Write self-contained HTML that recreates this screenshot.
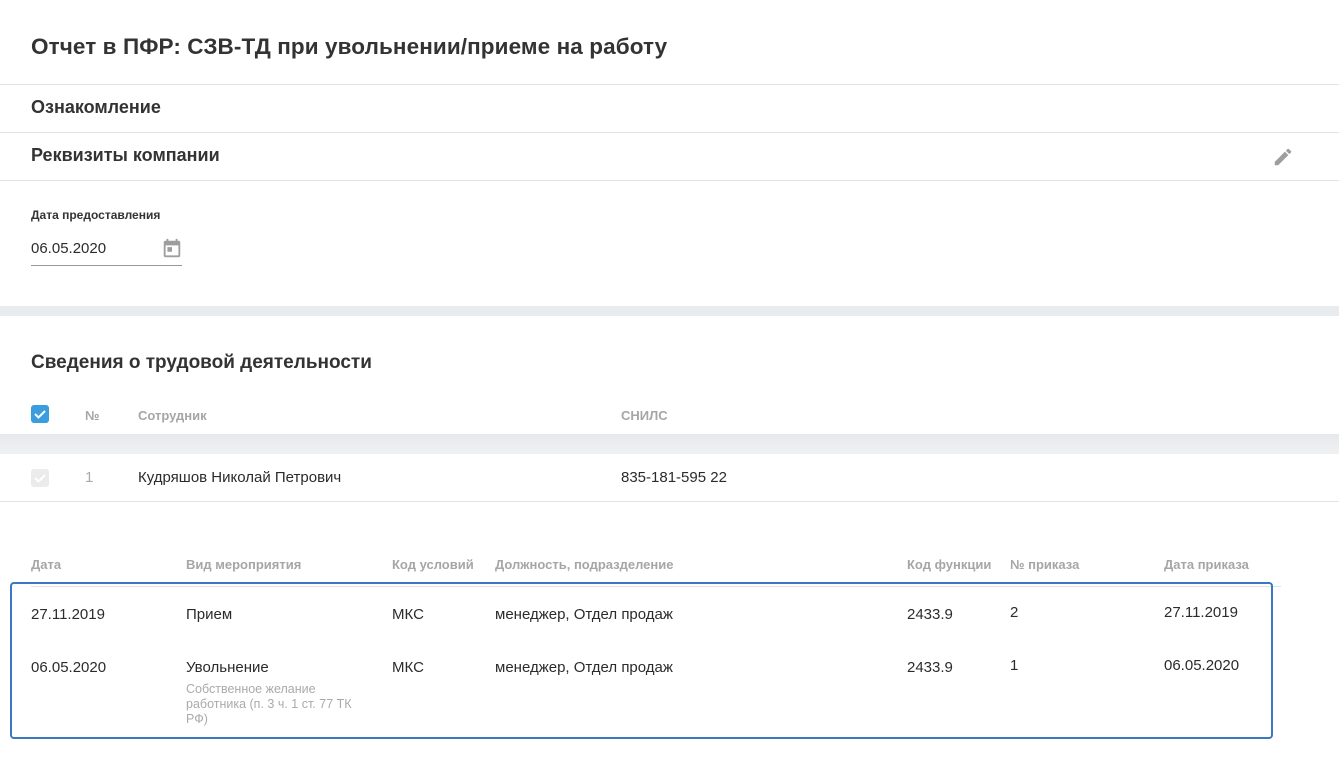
<!DOCTYPE html><html><head><meta charset="utf-8"><style>
body{margin:0;width:1339px;height:763px;background:#fff;font-family:"Liberation Sans",sans-serif;color:#2b2b2b;position:relative;overflow:hidden}
.a{position:absolute;white-space:nowrap}
.hl{position:absolute;left:0;width:1339px;height:1px;background:#e3e3e3}
.h{font-size:13px;color:#a6a6a6;font-weight:bold}
.t{font-size:15px}
.b{font-weight:bold;color:#333}
</style></head><body>
<div class="a b" style="left:31px;top:34px;font-size:22.5px;letter-spacing:0.1px">Отчет в ПФР: СЗВ-ТД при увольнении/приеме на работу</div>
<div class="hl" style="top:84px"></div>
<div class="a b" style="left:31px;top:97px;font-size:18px">Ознакомление</div>
<div class="hl" style="top:132px"></div>
<div class="a b" style="left:31px;top:145px;font-size:18px">Реквизиты компании</div>
<svg class="a" style="left:1272px;top:146px" width="22" height="22" viewBox="0 0 24 24"><path fill="#9e9e9e" d="M3 17.25V21h3.75L17.81 9.94l-3.75-3.75L3 17.25zM20.71 7.04a1 1 0 000-1.41l-2.34-2.34a1 1 0 00-1.41 0l-1.83 1.83 3.75 3.75 1.83-1.83z"/></svg>
<div class="hl" style="top:180px"></div>
<div class="a" style="left:31px;top:208px;font-size:12px;font-weight:bold;color:#333">Дата предоставления</div>
<div class="a t" style="left:31px;top:240px">06.05.2020</div>
<svg class="a" style="left:161px;top:238px" width="22" height="22" viewBox="0 0 24 24"><path fill="#9e9e9e" d="M19 3h-1V1h-2v2H8V1H6v2H5a2 2 0 00-2 2v14a2 2 0 002 2h14a2 2 0 002-2V5a2 2 0 00-2-2zm0 16H5V8h14v11zM7 10h5v5H7z"/></svg>
<div class="a" style="left:31px;top:265px;width:151px;height:1px;background:#999"></div>
<div class="a" style="left:0;top:306px;width:1339px;height:10px;background:#e9ecef"></div>
<div class="a b" style="left:31px;top:352px;font-size:19px">Сведения о трудовой деятельности</div>
<div class="a" style="left:31px;top:405px;width:18px;height:18px;border-radius:3px;background:#3b9de0"><svg width="18" height="18" viewBox="0 0 18 18"><path d="M4 9l3.5 3.5L14 6" stroke="#fff" stroke-width="2" fill="none"/></svg></div>
<div class="a h" style="left:85px;top:408px">№</div>
<div class="a h" style="left:138px;top:408px">Сотрудник</div>
<div class="a h" style="left:621px;top:408px">СНИЛС</div>
<div class="a" style="left:0;top:434px;width:1339px;height:20px;background:linear-gradient(#e6e8eb,#eff1f3)"></div>
<div class="a" style="left:31px;top:469px;width:18px;height:18px;border-radius:3px;background:#ebebeb"><svg width="18" height="18" viewBox="0 0 18 18"><path d="M4 9l3.5 3.5L14 6" stroke="#fff" stroke-width="2" fill="none"/></svg></div>
<div class="a t" style="left:85px;top:469px;color:#aaa">1</div>
<div class="a t" style="left:138px;top:469px">Кудряшов Николай Петрович</div>
<div class="a t" style="left:621px;top:469px">835-181-595 22</div>
<div class="hl" style="top:501px"></div>
<div class="a h" style="left:31px;top:557px">Дата</div>
<div class="a h" style="left:186px;top:557px">Вид мероприятия</div>
<div class="a h" style="left:392px;top:557px">Код условий</div>
<div class="a h" style="left:495px;top:557px">Должность, подразделение</div>
<div class="a h" style="left:907px;top:557px">Код функции</div>
<div class="a h" style="left:1010px;top:557px">№ приказа</div>
<div class="a h" style="left:1164px;top:557px">Дата приказа</div>
<div class="a" style="left:31px;top:586px;width:1250px;height:1px;background:#e3e3e3"></div>
<div class="a" style="left:10px;top:582px;width:1259px;height:153px;border:2px solid #3a78c0;border-radius:4px"></div>
<div class="a t" style="left:31px;top:606px">27.11.2019</div>
<div class="a t" style="left:186px;top:606px">Прием</div>
<div class="a t" style="left:392px;top:606px">МКС</div>
<div class="a t" style="left:495px;top:606px">менеджер, Отдел продаж</div>
<div class="a t" style="left:907px;top:606px">2433.9</div>
<div class="a t" style="left:1010px;top:604px">2</div>
<div class="a t" style="left:1164px;top:604px">27.11.2019</div>
<div class="a t" style="left:31px;top:659px">06.05.2020</div>
<div class="a t" style="left:186px;top:659px">Увольнение</div>
<div class="a" style="left:186px;top:682px;font-size:12.5px;color:#aaa;line-height:15px;white-space:normal;width:180px">Собственное желание работника (п. 3 ч. 1 ст. 77 ТК РФ)</div>
<div class="a t" style="left:392px;top:659px">МКС</div>
<div class="a t" style="left:495px;top:659px">менеджер, Отдел продаж</div>
<div class="a t" style="left:907px;top:659px">2433.9</div>
<div class="a t" style="left:1010px;top:657px">1</div>
<div class="a t" style="left:1164px;top:657px">06.05.2020</div>
</body></html>
